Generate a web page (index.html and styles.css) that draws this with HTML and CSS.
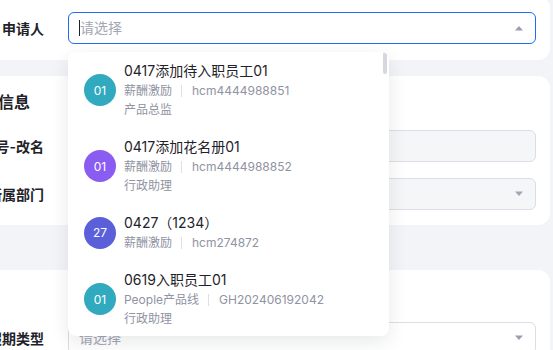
FILE: index.html
```html
<!DOCTYPE html>
<html lang="zh-CN">
<head>
    <meta charset="UTF-8">
    <meta name="viewport" content="width=device-width, initial-scale=1.0">
    <title>请假申请</title>
    <link rel="stylesheet" href="styles.css">
</head>
<body>
    <div class="page">
        <section class="card card-applicant">
            <div class="field">
                <label class="field-label">申请人</label>
                <div class="field-control">
                    <div class="select is-open">
                        <span class="caret"></span>
                        <span class="placeholder">请选择</span>
                        <svg class="arrow" width="10" height="6" viewBox="0 0 10 6"><path d="M1 5.5 L5 1 L9 5.5 Z" fill="#9b9eac"/></svg>
                    </div>

                    <div class="dropdown">
                        <div class="scrollbar"></div>
                        <ul class="option-list">
                            <li class="option">
                                <span class="avatar avatar-teal">01</span>
                                <div class="option-info">
                                    <div class="option-name">0417添加待入职员工01</div>
                                    <div class="option-meta">薪酬激励<span class="sep"></span>hcm4444988851</div>
                                    <div class="option-meta">产品总监</div>
                                </div>
                            </li>
                            <li class="option">
                                <span class="avatar avatar-purple">01</span>
                                <div class="option-info">
                                    <div class="option-name">0417添加花名册01</div>
                                    <div class="option-meta">薪酬激励<span class="sep"></span>hcm4444988852</div>
                                    <div class="option-meta">行政助理</div>
                                </div>
                            </li>
                            <li class="option">
                                <span class="avatar avatar-indigo">27</span>
                                <div class="option-info">
                                    <div class="option-name">0427（1234）</div>
                                    <div class="option-meta">薪酬激励<span class="sep"></span>hcm274872</div>
                                </div>
                            </li>
                            <li class="option">
                                <span class="avatar avatar-teal">01</span>
                                <div class="option-info">
                                    <div class="option-name">0619入职员工01</div>
                                    <div class="option-meta">People产品线<span class="sep"></span>GH202406192042</div>
                                    <div class="option-meta">行政助理</div>
                                </div>
                            </li>
                        </ul>
                    </div>
                </div>
            </div>
        </section>

        <section class="card card-info">
            <h2 class="card-title">基本信息</h2>
            <div class="field">
                <label class="field-label">账号-改名</label>
                <div class="field-control">
                    <div class="select is-disabled"></div>
                </div>
            </div>
            <div class="field">
                <label class="field-label">所属部门</label>
                <div class="field-control">
                    <div class="select is-disabled">
                        <svg class="arrow" width="10" height="6" viewBox="0 0 10 6"><path d="M1 0.5 L5 5 L9 0.5 Z" fill="#a3a5b3"/></svg>
                    </div>
                </div>
            </div>
        </section>

        <section class="card card-leave">
            <div class="field">
                <label class="field-label">假期类型</label>
                <div class="field-control">
                    <div class="select">
                        <span class="placeholder">请选择</span>
                        <svg class="arrow" width="10" height="6" viewBox="0 0 10 6"><path d="M1 0.5 L5 5 L9 0.5 Z" fill="#9b9eac"/></svg>
                    </div>
                </div>
            </div>
        </section>
    </div>
</body>
</html>
```

FILE: styles.css
```css
:root {
    --bg: #f3f4f8;
    --white: #ffffff;
    --text: #1f2329;
    --text-sub: #8f93a2;
    --placeholder: #a3a6b4;
    --border: #dcdde6;
    --primary: #1f6cf0;
    --disabled: #f5f6f8;
}

* {
    margin: 0;
    padding: 0;
    box-sizing: border-box;
    font-family: 'Inter', 'Noto Sans CJK SC', sans-serif;
}

body {
    background-color: var(--bg);
    overflow: hidden;
    height: 350px;
}

.page {
    width: 610px;
    margin: -4px 0 0 -60px;
}

.card {
    background-color: var(--white);
    border-radius: 12px;
    padding: 16px 14px 16px 26px;
}

.card-info {
    margin-top: 16px;
    padding-top: 14px;
    padding-bottom: 15px;
}

.card-leave {
    margin-top: 45px;
    padding-top: 52px;
}

.card-title {
    font-size: 16px;
    line-height: 24px;
    font-weight: 600;
    color: var(--text);
    margin-bottom: 16px;
}

.field {
    display: flex;
    align-items: center;
}

.field + .field {
    margin-top: 16px;
}

.field-label {
    width: 78px;
    margin-right: 24px;
    text-align: right;
    white-space: nowrap;
    font-size: 14px;
    font-weight: 600;
    color: var(--text);
}

.field-control {
    flex: 1;
    position: relative;
}

.select {
    height: 32px;
    border: 1px solid var(--border);
    border-radius: 6px;
    background-color: var(--white);
    display: flex;
    align-items: center;
    padding: 0 11px 0 10px;
}

.select.is-open {
    border-color: var(--primary);
}

.select.is-disabled {
    background-color: var(--disabled);
}

.caret {
    width: 1px;
    height: 16px;
    background-color: var(--text);
}

.placeholder {
    flex: 1;
    font-size: 14px;
    color: var(--placeholder);
    line-height: 20px;
}

.arrow {
    margin-left: auto;
}

.dropdown {
    position: absolute;
    top: 40px;
    left: 0;
    width: 321px;
    height: 284px;
    background-color: var(--white);
    border-radius: 8px;
    box-shadow: 0 6px 18px rgba(31, 35, 41, 0.1);
    overflow: hidden;
    z-index: 10;
}

.scrollbar {
    position: absolute;
    top: 0;
    right: 2px;
    width: 4px;
    height: 22px;
    border-radius: 2px;
    background-color: #d6d7e0;
}

.option-list {
    list-style: none;
}

.option {
    display: flex;
    align-items: center;
    padding: 9px 16px;
}

.avatar {
    width: 32px;
    height: 32px;
    border-radius: 50%;
    flex-shrink: 0;
    margin-right: 8px;
    display: flex;
    align-items: center;
    justify-content: center;
    color: var(--white);
    font-size: 12px;
    font-weight: 400;
}

.avatar-teal {
    background-color: #31a9be;
}

.avatar-purple {
    background-color: #8b5cf2;
}

.avatar-indigo {
    background-color: #5b5fda;
}

.option-name {
    font-size: 14px;
    line-height: 20px;
    color: var(--text);
    white-space: nowrap;
}

.option-meta {
    font-size: 12px;
    line-height: 19px;
    color: var(--text-sub);
    display: flex;
    align-items: center;
    white-space: nowrap;
}

.sep {
    width: 1px;
    height: 12px;
    background-color: #dfe0e6;
    margin: 0 10px 0 9px;
}
```
